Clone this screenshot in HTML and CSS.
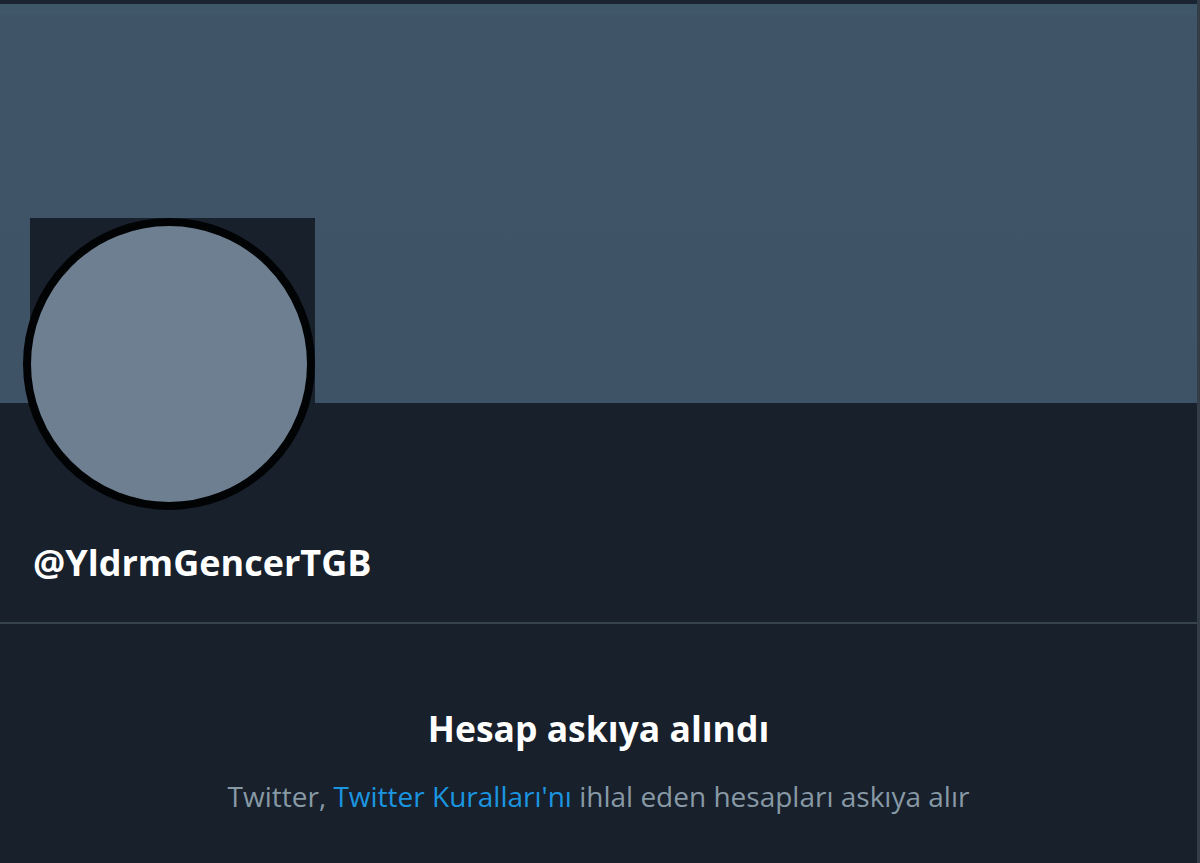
FILE: index.html
```html
<!DOCTYPE html>
<html lang="tr">
<head>
<meta charset="utf-8">
<title>@YldrmGencerTGB</title>
<link rel="stylesheet" href="styles.css">
</head>
<body>
<div class="page">
  <div class="topbar"></div>
  <div class="banner"></div>
  <div class="profile">
    <div class="avatar-wrap">
      <div class="avatar-square"></div>
      <div class="avatar"></div>
    </div>
    <div class="handle">@YldrmGencerTGB</div>
  </div>
  <div class="divider"></div>
  <div class="notice">
    <h1 class="notice-title">Hesap askıya alındı</h1>
    <p class="notice-text">Twitter, <a class="notice-link" href="#">Twitter Kuralları'nı</a> ihlal eden hesapları askıya alır</p>
  </div>
</div>
</body>
</html>
```

FILE: styles.css
```css
html, body {
  margin: 0;
  padding: 0;
  background: #17202b;
  height: 100%;
}
body {
  font-family: "Open Sans", "Noto Sans", "DejaVu Sans", sans-serif;
  color: #ffffff;
  overflow: hidden;
}
.page {
  width: 1197px;
  height: 863px;
  border-right: 3px solid #323d48;
  box-sizing: content-box;
  display: flex;
  flex-direction: column;
}
.topbar {
  height: 4px;
  flex: none;
  background: #1a2330;
}
.banner {
  height: 399px;
  flex: none;
  background: linear-gradient(to bottom, #3c5668 0px, #41576a 8px, #3f5467 14px, #3e5366 100%);
}
.profile {
  display: flex;
  flex-direction: column;
  align-items: flex-start;
  padding: 0 0 0 33px;
  height: 219px;
  flex: none;
}
.avatar-wrap {
  position: relative;
  width: 292px;
  height: 292px;
  flex: none;
  margin-top: -185px;
  margin-left: -10px;
}
.avatar-square {
  position: absolute;
  left: 7px;
  top: 0;
  width: 285px;
  height: 185px;
  background: #17202b;
}
.avatar {
  position: absolute;
  left: 0;
  top: 0;
  width: 292px;
  height: 292px;
  box-sizing: border-box;
  border: 8px solid #020304;
  border-radius: 50%;
  background: #6d7f91;
}
.handle {
  margin-top: 33px;
  font-size: 36px;
  font-weight: 700;
  line-height: 40px;
  letter-spacing: 0;
  color: #ffffff;
}
.divider {
  height: 2px;
  flex: none;
  background: #38444d;
}
.notice {
  text-align: center;
  padding-top: 84px;
}
.notice-title {
  margin: 0;
  font-size: 35.5px;
  font-weight: 700;
  line-height: 40px;
  color: #ffffff;
}
.notice-text {
  margin: 31px 0 0;
  font-size: 28px;
  font-weight: 400;
  line-height: 34px;
  color: #8899a6;
}
.notice-link {
  color: #1b95e0;
  text-decoration: none;
}
```
